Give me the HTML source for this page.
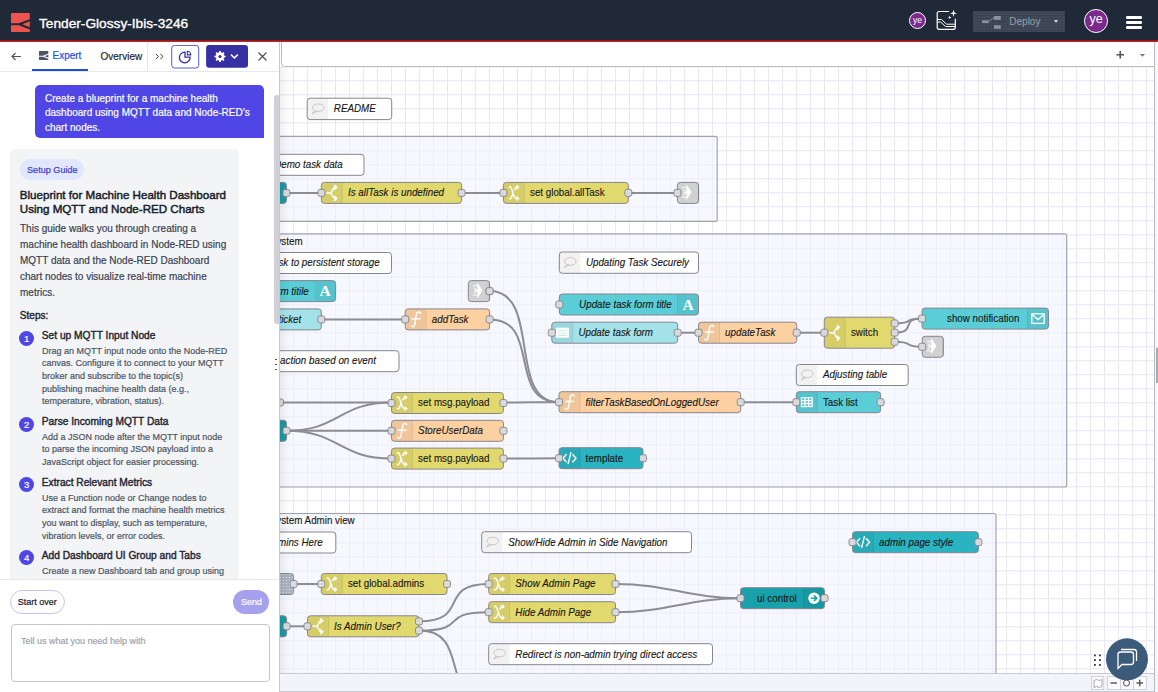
<!DOCTYPE html>
<html><head><meta charset="utf-8">
<style>
*{box-sizing:border-box}
html,body{margin:0;padding:0}
body{width:1158px;height:692px;overflow:hidden;position:relative;background:#fff;font-family:"Liberation Sans",sans-serif;}
#hdr{position:absolute;left:0;top:0;width:1158px;height:40px;background:#1f2937;}
#redl{position:absolute;left:0;top:40px;width:1158px;height:2px;background:linear-gradient(#7a2228 0 50%,#d41d1d 50% 100%);}
.abs{position:absolute}
#side div{-webkit-text-stroke:0.2px currentColor}

#side{position:absolute;left:0;top:42px;width:280px;height:650px;background:#fff;border-right:1px solid #c9c9d1;}
#canvas{position:absolute;left:280px;top:42px;width:878px;height:650px;overflow:hidden}
#canvas svg{position:absolute;left:0;top:0}
.nl{font-family:"Liberation Sans",sans-serif;font-size:10.6px;fill:#161616;stroke:#161616;stroke-width:0.12px}
.i{font-style:italic}
.gl{font-family:"Liberation Sans",sans-serif;font-size:10.6px;fill:#161616;stroke:#161616;stroke-width:0.12px}
.st{position:absolute;left:41.8px;font-size:10.2px;color:#1f2633;white-space:nowrap;-webkit-text-stroke:0.4px #1f2633 !important}
.sb{position:absolute;left:41.8px;font-size:9.7px;color:#4b5563;line-height:12.7px;white-space:nowrap;transform:scaleX(0.928);transform-origin:0 0}
.num{position:absolute;left:19.1px;width:15px;height:15px;border-radius:50%;background:#4f46e5;color:#fff;font-size:9.5px;text-align:center;line-height:15px}
</style></head><body>
<div id="hdr">
  <svg class="abs" style="left:10.8px;top:13px" width="19" height="19" viewBox="0 0 19 19">
    <rect x="0" y="0" width="18.8" height="19.2" rx="0.8" fill="#ef5350"/>
    <path d="M0 11.3H8.2L19 7.2M8.2 11.3L19 15.4" stroke="#1f2937" stroke-width="2.1" fill="none"/>
  </svg>
  <div class="abs" style="left:39px;top:16px;font-size:13.7px;color:#fff;white-space:nowrap;-webkit-text-stroke:0.35px #fff">Tender-Glossy-Ibis-3246</div>
  <div class="abs" style="left:908.8px;top:12.2px;width:17.2px;height:17.2px;border-radius:50%;background:#7b2a8c;border:1.2px solid #fff;color:#fff;font-size:8.5px;text-align:center;line-height:14.8px">ye</div>
  <svg class="abs" style="left:936px;top:10px" width="23" height="21" viewBox="936 10 23 21" fill="none" stroke="#fff" stroke-width="1.2">
    <path d="M949 11.5H939.2Q937.2 11.5 937.2 13.5V27.3Q937.2 29.3 939.2 29.3H953.3Q955.3 29.3 955.3 27.3V18.8"/>
    <path d="M937.2 19.5H941.5L946.5 24.2H955.3M937.2 22H940.5L945.5 26.5H955.3" stroke-width="1"/>
    <path d="M953.5 9.6L954.3 12.5L957.2 13.3L954.3 14.1L953.5 17L952.7 14.1L949.8 13.3L952.7 12.5Z" fill="#fff" stroke="none"/>
    <path d="M949.7 15.6L950.2 16.9L951.5 17.4L950.2 17.9L949.7 19.2L949.2 17.9L947.9 17.4L949.2 16.9Z" fill="#fff" stroke="none"/>
  </svg>
  <div class="abs" style="left:973px;top:11px;width:92px;height:20.8px;background-color:#3e4856;background-image:radial-gradient(#323a46 0.6px,transparent 0.7px);background-size:3px 3px"></div>
  <svg class="abs" style="left:980px;top:15px" width="22" height="15" viewBox="980 15 22 15" fill="#8a919c">
    <rect x="982" y="20.3" width="6.7" height="2.8"/><path d="M988 21.8L994 17.6" stroke="#8a919c" stroke-width="0.9"/><rect x="994" y="16" width="6.8" height="3.9"/><rect x="994" y="25.2" width="6.8" height="3.6"/>
  </svg>
  <div class="abs" style="left:1009.3px;top:16.2px;font-size:10px;color:#9aa0aa">Deploy</div>
  <div class="abs" style="left:1053.8px;top:20.3px;width:0;height:0;border-left:2.8px solid transparent;border-right:2.8px solid transparent;border-top:3.2px solid #d4d7dc"></div>
  <div class="abs" style="left:1084.3px;top:9.1px;width:23.8px;height:23.8px;border-radius:50%;background:#7b2a8c;border:1.4px solid #fff;color:#fff;font-size:12.5px;text-align:center;line-height:19.5px">ye</div>
  <div class="abs" style="left:1126.2px;top:15.9px;width:15.7px;height:2.7px;background:#fff;border-radius:1.3px"></div>
  <div class="abs" style="left:1126.2px;top:21.1px;width:15.7px;height:2.7px;background:#fff;border-radius:1.3px"></div>
  <div class="abs" style="left:1126.2px;top:26.2px;width:15.7px;height:2.7px;background:#fff;border-radius:1.3px"></div>
</div>
<div id="redl"></div>

<div id="side">
  <!-- tab bar -->
  <div class="abs" style="left:0;top:28.5px;width:279px;height:1px;background:#e5e7eb"></div>
  <svg class="abs" style="left:11px;top:10px" width="11" height="9" viewBox="0 0 11 9" fill="none" stroke="#4b5563" stroke-width="1.2"><path d="M10 4.5H1M4.5 1L1 4.5L4.5 8"/></svg>
  <svg class="abs" style="left:39px;top:9px" width="10" height="9" viewBox="0 0 10 9"><rect width="9.3" height="9" rx="0.5" fill="#4b5563"/><path d="M0 5.2H4L10 3M4 5.2L10 7.4" stroke="#fff" stroke-width="1.1" fill="none"/></svg>
  <div class="abs" style="left:52.5px;top:8px;font-size:10px;color:#1d4ed8">Expert</div>
  <div class="abs" style="left:32px;top:27px;width:56px;height:2px;background:#1d4ed8"></div>
  <div class="abs" style="left:100.5px;top:8.5px;font-size:10px;color:#1f2937">Overview</div>
  <div class="abs" style="left:147px;top:0;width:1px;height:29px;background:#e5e7eb"></div>
  <svg class="abs" style="left:150px;top:3px" width="110" height="26" viewBox="150 45 110 26">
    <path d="M155.8 54L158.6 56.5L155.8 59M160.3 54L163.1 56.5L160.3 59" stroke="#374151" stroke-width="1" fill="none"/>
    <rect x="171.7" y="45.4" width="27" height="22.6" rx="2.8" fill="#fff" stroke="#5b57e6" stroke-width="1"/>
    <path d="M185 52.2A5.3 5.3 0 1 0 190 57.2H185Z" fill="none" stroke="#3730a3" stroke-width="1.3"/>
    <path d="M187.3 51.3V54.9H190.8A3.7 3.7 0 0 0 187.3 51.3Z" fill="none" stroke="#3730a3" stroke-width="1.1"/>
    <rect x="206.1" y="45" width="41.9" height="22.7" rx="3" fill="#3730a3"/>
    <path d="M224.08 55.49 L225.54 55.67 L225.54 57.33 L224.08 57.51 L223.60 58.67 L224.50 59.83 L223.33 61.00 L222.17 60.10 L221.01 60.58 L220.83 62.04 L219.17 62.04 L218.99 60.58 L217.83 60.10 L216.67 61.00 L215.50 59.83 L216.40 58.67 L215.92 57.51 L214.46 57.33 L214.46 55.67 L215.92 55.49 L216.40 54.33 L215.50 53.17 L216.67 52.00 L217.83 52.90 L218.99 52.42 L219.17 50.96 L220.83 50.96 L221.01 52.42 L222.17 52.90 L223.33 52.00 L224.50 53.17 L223.60 54.33Z" fill="#fff"/>
    <circle cx="220" cy="56.5" r="1.6" fill="#3730a3"/>
    <path d="M231 54.6L234.4 58L237.8 54.6" stroke="#fff" stroke-width="1.5" fill="none"/>
  </svg>
  <svg class="abs" style="left:257.5px;top:10px" width="9" height="9" viewBox="0 0 9 9" stroke="#4b5563" stroke-width="1.3"><path d="M0.5 0.5L8.5 8.5M8.5 0.5L0.5 8.5"/></svg>

  <!-- chat content -->
  <div class="abs" style="left:35px;top:42.8px;width:229px;height:53.6px;background:#4f46e5;border-radius:5px 5px 0 5px"></div>
  <div class="abs" style="left:45.2px;top:48.7px;font-size:10.8px;line-height:14.6px;color:#fff;white-space:nowrap;transform:scaleX(0.926);transform-origin:0 0">Create a blueprint for a machine health<br>dashboard using MQTT data and Node-RED’s<br>chart nodes.</div>
  <div class="abs" style="left:274px;top:53px;width:5px;height:229px;background:#d0d0d6;border-radius:3px 0 0 3px"></div>

  <div class="abs" style="left:10px;top:107px;width:228.5px;height:430px;background:#f3f4f6;border-radius:5px 5px 0 0"></div>
  <div class="abs" style="left:19.5px;top:116.5px;width:64.3px;height:21.7px;background:#e0e7ff;border-radius:11px"></div>
  <div class="abs" style="left:27.2px;top:121.9px;font-size:9.6px;color:#4338ca;white-space:nowrap;transform:scaleX(0.95);transform-origin:0 0">Setup Guide</div>
  <div class="abs bt" style="left:19.8px;top:145.5px;font-size:11.6px;line-height:14px;color:#161c28;white-space:nowrap;-webkit-text-stroke:0.45px #161c28 !important">Blueprint for Machine Health Dashboard<br>Using MQTT and Node-RED Charts</div>
  <div class="abs" style="left:20px;top:179px;font-size:10.8px;line-height:15.9px;color:#374151;white-space:nowrap;transform:scaleX(0.926);transform-origin:0 0">This guide walks you through creating a<br>machine health dashboard in Node-RED using<br>MQTT data and the Node-RED Dashboard<br>chart nodes to visualize real-time machine<br>metrics.</div>
  <div class="abs bt" style="left:19.8px;top:268px;font-size:10.1px;color:#1f2633;-webkit-text-stroke:0.4px #1f2633 !important">Steps:</div>

  <div class="num" style="top:288.7px">1</div>
  <div class="st" style="top:288px">Set up MQTT Input Node</div>
  <div class="sb" style="top:302.6px">Drag an MQTT input node onto the Node-RED<br>canvas. Configure it to connect to your MQTT<br>broker and subscribe to the topic(s)<br>publishing machine health data (e.g.,<br>temperature, vibration, status).</div>

  <div class="num" style="top:375.2px">2</div>
  <div class="st" style="top:374px">Parse Incoming MQTT Data</div>
  <div class="sb" style="top:388.6px">Add a JSON node after the MQTT input node<br>to parse the incoming JSON payload into a<br>JavaScript object for easier processing.</div>

  <div class="num" style="top:434.9px">3</div>
  <div class="st" style="top:435px">Extract Relevant Metrics</div>
  <div class="sb" style="top:449.6px">Use a Function node or Change nodes to<br>extract and format the machine health metrics<br>you want to display, such as temperature,<br>vibration levels, or error codes.</div>

  <div class="num" style="top:507.9px">4</div>
  <div class="st" style="top:508px">Add Dashboard UI Group and Tabs</div>
  <div class="sb" style="top:523px">Create a new Dashboard tab and group using</div>

  <!-- bottom -->
  <div class="abs" style="left:0;top:537px;width:279px;height:113px;background:#fff;border-top:1px solid #e5e7eb"></div>
  <div class="abs" style="left:10px;top:548px;width:55px;height:23.5px;border:1px solid #c3c6f6;border-radius:12px;background:#fff"></div>
  <div class="abs" style="left:17.7px;top:555px;font-size:9px;color:#111827;white-space:nowrap">Start over</div>
  <div class="abs" style="left:233.3px;top:548px;width:36px;height:23.6px;background:#a5a1ec;border-radius:12px"></div>
  <div class="abs" style="left:241px;top:555px;font-size:9px;color:#fff">Send</div>
  <div class="abs" style="left:10.5px;top:582px;width:259px;height:57.5px;border:1px solid #c4c5cc;border-radius:4px;background:#fff"></div>
  <div class="abs" style="left:21px;top:594px;font-size:9px;color:#9ca3af;white-space:nowrap">Tell us what you need help with</div>
  <div class="abs" style="left:275px;top:317px;width:2px;height:12px;background:repeating-linear-gradient(#555 0 1.5px,transparent 1.5px 5px)"></div>
</div>

<div id="canvas">
  <svg width="878" height="650" viewBox="280 42 878 650">
    <rect x="280" y="42" width="878" height="650" fill="#fff"/>
    <defs><pattern id="dots" width="3" height="3" patternUnits="userSpaceOnUse"><rect width="3" height="3" fill="#aab3c2"/><rect x="1" y="1" width="1" height="1" fill="#d6dbe3"/></pattern></defs>
<rect x="280" y="67" width="874" height="607" fill="#fff"/>
<path d="M280 66.7H1154 M280 80.7H1154 M280 94.7H1154 M280 108.7H1154 M280 122.7H1154 M280 136.7H1154 M280 150.7H1154 M280 164.7H1154 M280 178.7H1154 M280 192.7H1154 M280 206.7H1154 M280 220.7H1154 M280 234.7H1154 M280 248.7H1154 M280 262.7H1154 M280 276.7H1154 M280 290.7H1154 M280 304.7H1154 M280 318.7H1154 M280 332.7H1154 M280 346.7H1154 M280 360.7H1154 M280 374.7H1154 M280 388.7H1154 M280 402.7H1154 M280 416.7H1154 M280 430.7H1154 M280 444.7H1154 M280 458.7H1154 M280 472.7H1154 M280 486.7H1154 M280 500.7H1154 M280 514.7H1154 M280 528.7H1154 M280 542.7H1154 M280 556.7H1154 M280 570.7H1154 M280 584.7H1154 M280 598.7H1154 M280 612.7H1154 M280 626.7H1154 M280 640.7H1154 M280 654.7H1154 M280 668.7H1154" stroke="#eeeef9" stroke-width="1.6" fill="none"/>
<path d="M293.5 67V674 M307.5 67V674 M321.5 67V674 M335.5 67V674 M349.5 67V674 M363.5 67V674 M377.5 67V674 M391.5 67V674 M405.5 67V674 M419.5 67V674 M433.5 67V674 M447.5 67V674 M461.5 67V674 M475.5 67V674 M489.5 67V674 M503.5 67V674 M517.5 67V674 M531.5 67V674 M545.5 67V674 M559.5 67V674 M573.5 67V674 M587.5 67V674 M601.5 67V674 M615.5 67V674 M629.5 67V674 M643.5 67V674 M656.5 67V674 M670.5 67V674 M684.5 67V674 M698.5 67V674 M712.5 67V674 M726.5 67V674 M740.5 67V674 M754.5 67V674 M768.5 67V674 M782.5 67V674 M796.5 67V674 M810.5 67V674 M824.5 67V674 M838.5 67V674 M852.5 67V674 M866.5 67V674 M880.5 67V674 M894.5 67V674 M908.5 67V674 M922.5 67V674 M936.5 67V674 M950.5 67V674 M964.5 67V674 M978.5 67V674 M992.5 67V674 M1006.5 67V674 M1020.5 67V674 M1034.5 67V674 M1048.5 67V674 M1062.5 67V674 M1076.5 67V674 M1090.5 67V674 M1104.5 67V674 M1118.5 67V674 M1132.5 67V674 M1146.5 67V674" stroke="#e7e7f6" stroke-width="1" fill="none"/>
<rect x="307.2" y="98.2" width="84.5" height="21.39999999999999" rx="3" fill="#fff" stroke="#858590" stroke-width="1"/>
<path d="M307.7 98.7h20.5v20.39999999999999h-20.5z" fill="rgba(0,0,0,0.05)"/>
<g transform="translate(317.7,108.9)" fill="none" stroke="#c4b8ba" stroke-width="0.8"><ellipse cx="0.5" cy="-1.2" rx="5.8" ry="3.8"/><path d="M-3.2 1.8L-5.5 4.8L-0.5 2.5"/></g>
<text transform="translate(333.8 112.3) scale(0.925 1)" class="nl i">README</text>
<rect x="200" y="136.3" width="517.2" height="85.1" rx="2" fill="rgba(241,243,252,0.59)" stroke="#a3a3ad" stroke-width="1.2"/>
<rect x="150" y="154.3" width="214" height="21" rx="3" fill="#fff" stroke="#858590" stroke-width="1"/>
<text transform="translate(342.8 168.2) scale(0.925 1)" text-anchor="end" class="nl i">Demo task data</text>
<path d="M286.4 193C312.65 193 295.15 193 321.4 193" stroke="#8c8c92" stroke-width="2" fill="none"/>
<path d="M461.6 193C492.95 193 472.05 193 503.4 193" stroke="#8c8c92" stroke-width="2" fill="none"/>
<path d="M628.3 193C665.12 193 640.57 193 677.4 193" stroke="#8c8c92" stroke-width="2" fill="none"/>
<rect x="200" y="182.4" width="86.4" height="21" rx="3" fill="#1a9aa6" stroke="#858590" stroke-width="1"/>
<rect x="282.9" y="189.5" width="7" height="7" rx="2" fill="#d9d9d9" stroke="#858590" stroke-width="0.9"/>
<rect x="321.4" y="182.4" width="140.20000000000005" height="21.0" rx="3" fill="#e2d96e" stroke="#858590" stroke-width="1"/>
<path d="M342.4 182.9H324.4Q321.9 182.9 321.9 185.4V200.4Q321.9 202.9 324.4 202.9H342.4Z" fill="rgba(0,0,0,0.05)"/>
<path d="M342.4 183.4V202.4" stroke="rgba(0,0,0,0.08)" stroke-width="1"/>
<g transform="translate(331.9,192.9)" stroke="#fff" stroke-width="1.5" fill="none" stroke-linecap="round" stroke-linejoin="round"><path d="M-5 0H-1.5M-1.5 0C0.5 0 0.5 -5.5 3 -5.5H4M-1.5 0C0.5 0 0.5 5.5 3 5.5H4"/><path d="M2.5 -7.5L4.8 -5.5L2.5 -3.5M2.5 7.5L4.8 5.5L2.5 3.5"/></g>
<text transform="translate(348.0 196.3) scale(0.925 1)" class="nl i">Is allTask is undefined</text>
<rect x="317.9" y="189.4" width="7" height="7" rx="2" fill="#d9d9d9" stroke="#858590" stroke-width="0.9"/>
<rect x="458.1" y="189.4" width="7" height="7" rx="2" fill="#d9d9d9" stroke="#858590" stroke-width="0.9"/>
<rect x="503.4" y="182.4" width="124.89999999999998" height="21.0" rx="3" fill="#e2d96e" stroke="#858590" stroke-width="1"/>
<path d="M524.4 182.9H506.4Q503.9 182.9 503.9 185.4V200.4Q503.9 202.9 506.4 202.9H524.4Z" fill="rgba(0,0,0,0.05)"/>
<path d="M524.4 183.4V202.4" stroke="rgba(0,0,0,0.08)" stroke-width="1"/>
<g transform="translate(513.9,192.9)"><path d="M-5.2 -5.8H-3.8C-1.5 -5.8 -0.5 5.6 2.2 5.6H3M-5.2 5.8H-3.8C-2.6 5.8 -1.8 3 -1 1M0.6 -2.6C1.2 -4.6 1.6 -5.6 2.2 -5.6H3" stroke="#fff" stroke-width="1.5" fill="none"/><path d="M2.6 -8.3L5.8 -5.6L2.6 -2.9ZM2.6 2.9L5.8 5.6L2.6 8.3Z" fill="#fff"/></g>
<text transform="translate(530.0 196.3) scale(0.925 1)" class="nl">set global.allTask</text>
<rect x="499.9" y="189.4" width="7" height="7" rx="2" fill="#d9d9d9" stroke="#858590" stroke-width="0.9"/>
<rect x="624.8" y="189.4" width="7" height="7" rx="2" fill="#d9d9d9" stroke="#858590" stroke-width="0.9"/>
<rect x="677.4" y="182.4" width="21.200000000000045" height="21.0" rx="3" fill="#dddddd" stroke="#858590" stroke-width="1"/>
<path d="M698.4 182.9H680.4Q677.9 182.9 677.9 185.4V200.4Q677.9 202.9 680.4 202.9H698.4Z" fill="rgba(0,0,0,0.05)"/>
<path d="M698.4 183.4V202.4" stroke="rgba(0,0,0,0.08)" stroke-width="1"/>
<g transform="translate(687.6,192.5)"><path d="M-1.2 -8.2L3.8 -0.3L-1.2 7.6L0.6 -0.3Z" fill="#fff"/><path d="M-1.2 -8.2L3.8 -0.3L-1.2 7.6Z" fill="#fff"/><path d="M-5.6 -5H-1.2M-5.6 4.5H-1.2M-4.8 -2.8A2.6 2.6 0 0 1 -4.8 2.4M-4.5 -0.3H0" stroke="#fff" stroke-width="0.9" fill="none"/></g>
<rect x="673.9" y="189.4" width="7" height="7" rx="2" fill="#d9d9d9" stroke="#858590" stroke-width="0.9"/>
<rect x="200" y="233.8" width="866.7" height="253.2" rx="2" fill="rgba(241,243,252,0.59)" stroke="#a3a3ad" stroke-width="1.2"/>
<text transform="translate(302.6 245) scale(0.925 1)" text-anchor="end" class="gl">Task Management System</text>
<rect x="150" y="252.5" width="241.5" height="21" rx="3" fill="#fff" stroke="#858590" stroke-width="1"/>
<text transform="translate(379.7 266.3) scale(0.925 1)" text-anchor="end" class="nl i">Save task to persistent storage</text>
<rect x="150" y="280.6" width="185.6" height="21" rx="3" fill="#5acdd7" stroke="#858590" stroke-width="1"/>
<path d="M314.6 281.1h20.5v20h-20.5z" fill="rgba(0,0,0,0.05)"/>
<text x="325.1" y="296.40000000000003" text-anchor="middle" font-family="Liberation Serif" font-weight="bold" font-size="15.5" fill="#fff">A</text>
<text transform="translate(308.8 294.5) scale(0.925 1)" text-anchor="end" class="nl i">Update task form titile</text>
<rect x="150" y="308.9" width="171.3" height="21" rx="3" fill="#a3e2e9" stroke="#858590" stroke-width="1"/>
<text transform="translate(301.3 322.5) scale(0.925 1)" text-anchor="end" class="nl i">Create ticket</text>
<path d="M321.3 319.4C373.80 319.4 352.70 319.4 405.2 319.4" stroke="#8c8c92" stroke-width="2" fill="none"/>
<rect x="317.8" y="315.9" width="7" height="7" rx="2" fill="#d9d9d9" stroke="#858590" stroke-width="0.9"/>
<rect x="468.3" y="280.6" width="21.30000000000001" height="21.0" rx="3" fill="#dddddd" stroke="#858590" stroke-width="1"/>
<path d="M489.3 281.1H471.3Q468.8 281.1 468.8 283.6V298.6Q468.8 301.1 471.3 301.1H489.3Z" fill="rgba(0,0,0,0.05)"/>
<path d="M489.3 281.6V300.6" stroke="rgba(0,0,0,0.08)" stroke-width="1"/>
<g transform="translate(478.5,290.70000000000005)"><path d="M-1.2 -8.2L3.8 -0.3L-1.2 7.6L0.6 -0.3Z" fill="#fff"/><path d="M-1.2 -8.2L3.8 -0.3L-1.2 7.6Z" fill="#fff"/><path d="M-5.6 -5H-1.2M-5.6 4.5H-1.2M-4.8 -2.8A2.6 2.6 0 0 1 -4.8 2.4M-4.5 -0.3H0" stroke="#fff" stroke-width="0.9" fill="none"/></g>
<rect x="486.1" y="287.6" width="7" height="7" rx="2" fill="#d9d9d9" stroke="#858590" stroke-width="0.9"/>
<path d="M489.6 291.1C542.10 291.1 506.50 402.2 559 402.2" stroke="#8c8c92" stroke-width="2" fill="none"/>
<path d="M489.6 319.4C542.10 319.4 506.50 402.2 559 402.2" stroke="#8c8c92" stroke-width="2" fill="none"/>
<rect x="405.2" y="308.9" width="84.40000000000003" height="21.0" rx="3" fill="#fdd0a2" stroke="#858590" stroke-width="1"/>
<path d="M426.2 309.4H408.2Q405.7 309.4 405.7 311.9V326.9Q405.7 329.4 408.2 329.4H426.2Z" fill="rgba(0,0,0,0.05)"/>
<path d="M426.2 309.9V328.9" stroke="rgba(0,0,0,0.08)" stroke-width="1"/>
<g transform="translate(415.7,319.4)" stroke="#fff" stroke-width="1.5" fill="none" stroke-linecap="round"><path d="M4.8 -6.2C3.8 -8 1 -7.5 0.6 -5L-0.9 5C-1.3 7.5 -3.8 8 -4.2 6.3M-3.8 -0.6H4.2"/></g>
<text transform="translate(431.8 322.8) scale(0.925 1)" class="nl i">addTask</text>
<rect x="401.7" y="315.9" width="7" height="7" rx="2" fill="#d9d9d9" stroke="#858590" stroke-width="0.9"/>
<rect x="486.1" y="315.9" width="7" height="7" rx="2" fill="#d9d9d9" stroke="#858590" stroke-width="0.9"/>
<rect x="486.1" y="287.6" width="7" height="7" rx="2" fill="#d9d9d9" stroke="#858590" stroke-width="0.9"/>
<rect x="150" y="350.7" width="249" height="21" rx="3" fill="#fff" stroke="#858590" stroke-width="1"/>
<text transform="translate(376 364.4) scale(0.925 1)" text-anchor="end" class="nl i">Perform action based on event</text>
<rect x="559.3" y="252" width="139.20000000000005" height="21.30000000000001" rx="3" fill="#fff" stroke="#858590" stroke-width="1"/>
<path d="M559.8 252.5h20.5v20.30000000000001h-20.5z" fill="rgba(0,0,0,0.05)"/>
<g transform="translate(569.8,262.65)" fill="none" stroke="#c4b8ba" stroke-width="0.8"><ellipse cx="0.5" cy="-1.2" rx="5.8" ry="3.8"/><path d="M-3.2 1.8L-5.5 4.8L-0.5 2.5"/></g>
<text transform="translate(585.9 266.0) scale(0.925 1)" class="nl i">Updating Task Securely</text>
<rect x="559.3" y="294" width="139.20000000000005" height="21" rx="3" fill="#5acdd7" stroke="#858590" stroke-width="1"/>
<path d="M677.5 294.5H695.5Q698.0 294.5 698.0 297V312Q698.0 314.5 695.5 314.5H677.5Z" fill="rgba(0,0,0,0.05)"/>
<path d="M677.5 295V314" stroke="rgba(0,0,0,0.08)" stroke-width="1"/>
<text x="688.0" y="309.8" text-anchor="middle" font-family="Liberation Serif" font-weight="bold" font-size="15.5" fill="#fff">A</text>
<text transform="translate(579.1 307.9) scale(0.925 1)" class="nl i">Update task form title</text>
<rect x="555.8" y="301.0" width="7" height="7" rx="2" fill="#d9d9d9" stroke="#858590" stroke-width="0.9"/>
<path d="M677.7 332.7C693.30 332.7 682.90 332.7 698.5 332.7" stroke="#8c8c92" stroke-width="2" fill="none"/>
<rect x="551.8" y="322.2" width="125.90000000000009" height="21.0" rx="3" fill="#a3e2e9" stroke="#858590" stroke-width="1"/>
<path d="M572.8 322.7H554.8Q552.3 322.7 552.3 325.2V340.2Q552.3 342.7 554.8 342.7H572.8Z" fill="rgba(0,0,0,0.05)"/>
<path d="M572.8 323.2V342.2" stroke="rgba(0,0,0,0.08)" stroke-width="1"/>
<g transform="translate(562.3,332.7)"><rect x="-6.4" y="-5" width="13" height="10" fill="#fff"/><path d="M-4.6 -2.2H4.8M-4.6 0.3H4.8M-4.6 2.8H4.8" stroke="#c9eef2" stroke-width="1"/></g>
<text transform="translate(578.4 336.1) scale(0.925 1)" class="nl i">Update task form</text>
<rect x="548.3" y="329.2" width="7" height="7" rx="2" fill="#d9d9d9" stroke="#858590" stroke-width="0.9"/>
<rect x="674.2" y="329.2" width="7" height="7" rx="2" fill="#d9d9d9" stroke="#858590" stroke-width="0.9"/>
<path d="M796.7 332.7C817.40 332.7 803.60 332.7 824.3 332.7" stroke="#8c8c92" stroke-width="2" fill="none"/>
<rect x="698.5" y="322.2" width="98.20000000000005" height="21.0" rx="3" fill="#fdd0a2" stroke="#858590" stroke-width="1"/>
<path d="M719.5 322.7H701.5Q699.0 322.7 699.0 325.2V340.2Q699.0 342.7 701.5 342.7H719.5Z" fill="rgba(0,0,0,0.05)"/>
<path d="M719.5 323.2V342.2" stroke="rgba(0,0,0,0.08)" stroke-width="1"/>
<g transform="translate(709.0,332.7)" stroke="#fff" stroke-width="1.5" fill="none" stroke-linecap="round"><path d="M4.8 -6.2C3.8 -8 1 -7.5 0.6 -5L-0.9 5C-1.3 7.5 -3.8 8 -4.2 6.3M-3.8 -0.6H4.2"/></g>
<text transform="translate(725.1 336.1) scale(0.925 1)" class="nl i">updateTask</text>
<rect x="695.0" y="329.2" width="7" height="7" rx="2" fill="#d9d9d9" stroke="#858590" stroke-width="0.9"/>
<rect x="793.2" y="329.2" width="7" height="7" rx="2" fill="#d9d9d9" stroke="#858590" stroke-width="0.9"/>
<path d="M894.7 323.4C915.49 323.4 901.21 318.6 922 318.6" stroke="#8c8c92" stroke-width="2" fill="none"/>
<path d="M894.7 332.6C917.71 332.6 898.99 318.6 922 318.6" stroke="#8c8c92" stroke-width="2" fill="none"/>
<path d="M894.7 341.8C915.66 341.8 901.24 346.8 922.2 346.8" stroke="#8c8c92" stroke-width="2" fill="none"/>
<rect x="824.3" y="317.2" width="70.40000000000009" height="31.0" rx="3" fill="#e2d96e" stroke="#858590" stroke-width="1"/>
<path d="M845.3 317.7H827.3Q824.8 317.7 824.8 320.2V345.2Q824.8 347.7 827.3 347.7H845.3Z" fill="rgba(0,0,0,0.05)"/>
<path d="M845.3 318.2V347.2" stroke="rgba(0,0,0,0.08)" stroke-width="1"/>
<g transform="translate(834.8,332.7)" stroke="#fff" stroke-width="1.5" fill="none" stroke-linecap="round" stroke-linejoin="round"><path d="M-5 0H-1.5M-1.5 0C0.5 0 0.5 -5.5 3 -5.5H4M-1.5 0C0.5 0 0.5 5.5 3 5.5H4"/><path d="M2.5 -7.5L4.8 -5.5L2.5 -3.5M2.5 7.5L4.8 5.5L2.5 3.5"/></g>
<text transform="translate(850.9 336.1) scale(0.925 1)" class="nl">switch</text>
<rect x="820.8" y="329.2" width="7" height="7" rx="2" fill="#d9d9d9" stroke="#858590" stroke-width="0.9"/>
<rect x="891.2" y="319.9" width="7" height="7" rx="2" fill="#d9d9d9" stroke="#858590" stroke-width="0.9"/>
<rect x="891.2" y="329.1" width="7" height="7" rx="2" fill="#d9d9d9" stroke="#858590" stroke-width="0.9"/>
<rect x="891.2" y="338.3" width="7" height="7" rx="2" fill="#d9d9d9" stroke="#858590" stroke-width="0.9"/>
<rect x="922" y="308.1" width="126.5" height="21.0" rx="3" fill="#5acdd7" stroke="#858590" stroke-width="1"/>
<path d="M1027.5 308.6H1045.5Q1048.0 308.6 1048.0 311.1V326.1Q1048.0 328.6 1045.5 328.6H1027.5Z" fill="rgba(0,0,0,0.05)"/>
<path d="M1027.5 309.1V328.1" stroke="rgba(0,0,0,0.08)" stroke-width="1"/>
<g transform="translate(1038.0,318.6)" stroke="#fff" stroke-width="1.3" fill="none"><rect x="-6.2" y="-4.8" width="12.4" height="9.6"/><path d="M-6 -4.2L0 1L6 -4.2"/></g>
<text transform="translate(947 322.0) scale(0.925 1)" class="nl">show notification</text>
<rect x="918.5" y="315.1" width="7" height="7" rx="2" fill="#d9d9d9" stroke="#858590" stroke-width="0.9"/>
<rect x="922.2" y="336.3" width="21.09999999999991" height="21.0" rx="3" fill="#dddddd" stroke="#858590" stroke-width="1"/>
<path d="M943.2 336.8H925.2Q922.7 336.8 922.7 339.3V354.3Q922.7 356.8 925.2 356.8H943.2Z" fill="rgba(0,0,0,0.05)"/>
<path d="M943.2 337.3V356.3" stroke="rgba(0,0,0,0.08)" stroke-width="1"/>
<g transform="translate(932.4000000000001,346.40000000000003)"><path d="M-1.2 -8.2L3.8 -0.3L-1.2 7.6L0.6 -0.3Z" fill="#fff"/><path d="M-1.2 -8.2L3.8 -0.3L-1.2 7.6Z" fill="#fff"/><path d="M-5.6 -5H-1.2M-5.6 4.5H-1.2M-4.8 -2.8A2.6 2.6 0 0 1 -4.8 2.4M-4.5 -0.3H0" stroke="#fff" stroke-width="0.9" fill="none"/></g>
<rect x="918.7" y="343.3" width="7" height="7" rx="2" fill="#d9d9d9" stroke="#858590" stroke-width="0.9"/>
<rect x="796.3" y="364.5" width="111.90000000000009" height="21.0" rx="3" fill="#fff" stroke="#858590" stroke-width="1"/>
<path d="M796.8 365.0h20.5v20.0h-20.5z" fill="rgba(0,0,0,0.05)"/>
<g transform="translate(806.8,375.0)" fill="none" stroke="#c4b8ba" stroke-width="0.8"><ellipse cx="0.5" cy="-1.2" rx="5.8" ry="3.8"/><path d="M-3.2 1.8L-5.5 4.8L-0.5 2.5"/></g>
<text transform="translate(822.9 378.4) scale(0.925 1)" class="nl i">Adjusting table</text>
<path d="M280 402.5C332.50 402.5 339.00 402.5 391.5 402.5" stroke="#8c8c92" stroke-width="2" fill="none"/>
<rect x="276.5" y="399.0" width="7" height="7" rx="2" fill="#d9d9d9" stroke="#858590" stroke-width="0.9"/>
<path d="M286.5 430.8C339.00 430.8 339.00 402.5 391.5 402.5" stroke="#8c8c92" stroke-width="2" fill="none"/>
<path d="M286.5 430.8C339.00 430.8 339.00 430.8 391.5 430.8" stroke="#8c8c92" stroke-width="2" fill="none"/>
<path d="M286.5 430.8C339.00 430.8 339.00 458.6 391.5 458.6" stroke="#8c8c92" stroke-width="2" fill="none"/>
<rect x="200" y="420.3" width="86.5" height="21" rx="3" fill="#1a9aa6" stroke="#858590" stroke-width="1"/>
<rect x="283.0" y="427.3" width="7" height="7" rx="2" fill="#d9d9d9" stroke="#858590" stroke-width="0.9"/>
<path d="M503.4 402.5C545.10 402.5 517.30 402.2 559 402.2" stroke="#8c8c92" stroke-width="2" fill="none"/>
<path d="M503.4 458.6C545.10 458.6 517.30 458.2 559 458.2" stroke="#8c8c92" stroke-width="2" fill="none"/>
<path d="M740.7 402.2C782.40 402.2 754.60 402.2 796.3 402.2" stroke="#8c8c92" stroke-width="2" fill="none"/>
<rect x="391.5" y="392.5" width="111.89999999999998" height="21.0" rx="3" fill="#e2d96e" stroke="#858590" stroke-width="1"/>
<path d="M412.5 393.0H394.5Q392.0 393.0 392.0 395.5V410.5Q392.0 413.0 394.5 413.0H412.5Z" fill="rgba(0,0,0,0.05)"/>
<path d="M412.5 393.5V412.5" stroke="rgba(0,0,0,0.08)" stroke-width="1"/>
<g transform="translate(402.0,403.0)"><path d="M-5.2 -5.8H-3.8C-1.5 -5.8 -0.5 5.6 2.2 5.6H3M-5.2 5.8H-3.8C-2.6 5.8 -1.8 3 -1 1M0.6 -2.6C1.2 -4.6 1.6 -5.6 2.2 -5.6H3" stroke="#fff" stroke-width="1.5" fill="none"/><path d="M2.6 -8.3L5.8 -5.6L2.6 -2.9ZM2.6 2.9L5.8 5.6L2.6 8.3Z" fill="#fff"/></g>
<text transform="translate(418.1 406.4) scale(0.925 1)" class="nl">set msg.payload</text>
<rect x="388.0" y="399.5" width="7" height="7" rx="2" fill="#d9d9d9" stroke="#858590" stroke-width="0.9"/>
<rect x="499.9" y="399.5" width="7" height="7" rx="2" fill="#d9d9d9" stroke="#858590" stroke-width="0.9"/>
<rect x="391.5" y="420.3" width="111.89999999999998" height="21.0" rx="3" fill="#fdd0a2" stroke="#858590" stroke-width="1"/>
<path d="M412.5 420.8H394.5Q392.0 420.8 392.0 423.3V438.3Q392.0 440.8 394.5 440.8H412.5Z" fill="rgba(0,0,0,0.05)"/>
<path d="M412.5 421.3V440.3" stroke="rgba(0,0,0,0.08)" stroke-width="1"/>
<g transform="translate(402.0,430.8)" stroke="#fff" stroke-width="1.5" fill="none" stroke-linecap="round"><path d="M4.8 -6.2C3.8 -8 1 -7.5 0.6 -5L-0.9 5C-1.3 7.5 -3.8 8 -4.2 6.3M-3.8 -0.6H4.2"/></g>
<text transform="translate(418.1 434.2) scale(0.925 1)" class="nl i">StoreUserData</text>
<rect x="388.0" y="427.3" width="7" height="7" rx="2" fill="#d9d9d9" stroke="#858590" stroke-width="0.9"/>
<rect x="499.9" y="427.3" width="7" height="7" rx="2" fill="#d9d9d9" stroke="#858590" stroke-width="0.9"/>
<rect x="391.5" y="448.1" width="111.89999999999998" height="21.0" rx="3" fill="#e2d96e" stroke="#858590" stroke-width="1"/>
<path d="M412.5 448.6H394.5Q392.0 448.6 392.0 451.1V466.1Q392.0 468.6 394.5 468.6H412.5Z" fill="rgba(0,0,0,0.05)"/>
<path d="M412.5 449.1V468.1" stroke="rgba(0,0,0,0.08)" stroke-width="1"/>
<g transform="translate(402.0,458.6)"><path d="M-5.2 -5.8H-3.8C-1.5 -5.8 -0.5 5.6 2.2 5.6H3M-5.2 5.8H-3.8C-2.6 5.8 -1.8 3 -1 1M0.6 -2.6C1.2 -4.6 1.6 -5.6 2.2 -5.6H3" stroke="#fff" stroke-width="1.5" fill="none"/><path d="M2.6 -8.3L5.8 -5.6L2.6 -2.9ZM2.6 2.9L5.8 5.6L2.6 8.3Z" fill="#fff"/></g>
<text transform="translate(418.1 462.0) scale(0.925 1)" class="nl">set msg.payload</text>
<rect x="388.0" y="455.1" width="7" height="7" rx="2" fill="#d9d9d9" stroke="#858590" stroke-width="0.9"/>
<rect x="499.9" y="455.1" width="7" height="7" rx="2" fill="#d9d9d9" stroke="#858590" stroke-width="0.9"/>
<rect x="559" y="391.7" width="181.70000000000005" height="21.0" rx="3" fill="#fdd0a2" stroke="#858590" stroke-width="1"/>
<path d="M580 392.2H562Q559.5 392.2 559.5 394.7V409.7Q559.5 412.2 562 412.2H580Z" fill="rgba(0,0,0,0.05)"/>
<path d="M580 392.7V411.7" stroke="rgba(0,0,0,0.08)" stroke-width="1"/>
<g transform="translate(569.5,402.2)" stroke="#fff" stroke-width="1.5" fill="none" stroke-linecap="round"><path d="M4.8 -6.2C3.8 -8 1 -7.5 0.6 -5L-0.9 5C-1.3 7.5 -3.8 8 -4.2 6.3M-3.8 -0.6H4.2"/></g>
<text transform="translate(585.6 405.6) scale(0.925 1)" class="nl i">filterTaskBasedOnLoggedUser</text>
<rect x="555.5" y="398.7" width="7" height="7" rx="2" fill="#d9d9d9" stroke="#858590" stroke-width="0.9"/>
<rect x="737.2" y="398.7" width="7" height="7" rx="2" fill="#d9d9d9" stroke="#858590" stroke-width="0.9"/>
<rect x="796.3" y="391.7" width="84.30000000000007" height="21.0" rx="3" fill="#5acdd7" stroke="#858590" stroke-width="1"/>
<path d="M817.3 392.2H799.3Q796.8 392.2 796.8 394.7V409.7Q796.8 412.2 799.3 412.2H817.3Z" fill="rgba(0,0,0,0.05)"/>
<path d="M817.3 392.7V411.7" stroke="rgba(0,0,0,0.08)" stroke-width="1"/>
<g transform="translate(806.8,402.2)"><rect x="-6" y="-5" width="12" height="10" fill="#fff"/><g fill="#2ab3c0"><rect x="-4.8" y="-3.8" width="2.4" height="1.3"/><rect x="-1.2" y="-3.8" width="2.4" height="1.3"/><rect x="2.4" y="-3.8" width="2.4" height="1.3"/><rect x="-4.8" y="-0.8" width="2.4" height="1.3"/><rect x="-1.2" y="-0.8" width="2.4" height="1.3"/><rect x="2.4" y="-0.8" width="2.4" height="1.3"/><rect x="-4.8" y="2.2" width="2.4" height="1.3"/><rect x="-1.2" y="2.2" width="2.4" height="1.3"/><rect x="2.4" y="2.2" width="2.4" height="1.3"/></g></g>
<text transform="translate(822.9 405.6) scale(0.925 1)" class="nl">Task list</text>
<rect x="792.8" y="398.7" width="7" height="7" rx="2" fill="#d9d9d9" stroke="#858590" stroke-width="0.9"/>
<rect x="877.1" y="398.7" width="7" height="7" rx="2" fill="#d9d9d9" stroke="#858590" stroke-width="0.9"/>
<rect x="559" y="447.7" width="84" height="21.0" rx="3" fill="#2ab3c0" stroke="#858590" stroke-width="1"/>
<path d="M580 448.2H562Q559.5 448.2 559.5 450.7V465.7Q559.5 468.2 562 468.2H580Z" fill="rgba(0,0,0,0.05)"/>
<path d="M580 448.7V467.7" stroke="rgba(0,0,0,0.08)" stroke-width="1"/>
<g transform="translate(569.5,458.2)" stroke="#fff" stroke-width="1.4" fill="none"><path d="M-3 -4L-6.5 0L-3 4M3 -4L6.5 0L3 4M1.5 -6L-1.5 6"/></g>
<text transform="translate(585.6 461.6) scale(0.925 1)" class="nl">template</text>
<rect x="555.5" y="454.7" width="7" height="7" rx="2" fill="#d9d9d9" stroke="#858590" stroke-width="0.9"/>
<rect x="639.5" y="454.7" width="7" height="7" rx="2" fill="#d9d9d9" stroke="#858590" stroke-width="0.9"/>
<rect x="200" y="513.5" width="796" height="286.5" rx="2" fill="rgba(241,243,252,0.59)" stroke="#a3a3ad" stroke-width="1.2"/>
<text transform="translate(354.7 524.4) scale(0.925 1)" text-anchor="end" class="gl">Task Management System Admin view</text>
<rect x="150" y="532" width="185.8" height="21" rx="3" fill="#fff" stroke="#858590" stroke-width="1"/>
<text transform="translate(322.7 545.9) scale(0.925 1)" text-anchor="end" class="nl i">Define Admins Here</text>
<rect x="200" y="573.5" width="93.6" height="21" rx="3" fill="url(#dots)" stroke="#858590" stroke-width="1"/>
<path d="M293.6 584C314.38 584 300.53 584 321.3 584" stroke="#8c8c92" stroke-width="2" fill="none"/>
<rect x="290.1" y="580.5" width="7" height="7" rx="2" fill="#d9d9d9" stroke="#858590" stroke-width="0.9"/>
<rect x="321.3" y="573.5" width="125.69999999999999" height="21.0" rx="3" fill="#e2d96e" stroke="#858590" stroke-width="1"/>
<path d="M342.3 574.0H324.3Q321.8 574.0 321.8 576.5V591.5Q321.8 594.0 324.3 594.0H342.3Z" fill="rgba(0,0,0,0.05)"/>
<path d="M342.3 574.5V593.5" stroke="rgba(0,0,0,0.08)" stroke-width="1"/>
<g transform="translate(331.8,584.0)"><path d="M-5.2 -5.8H-3.8C-1.5 -5.8 -0.5 5.6 2.2 5.6H3M-5.2 5.8H-3.8C-2.6 5.8 -1.8 3 -1 1M0.6 -2.6C1.2 -4.6 1.6 -5.6 2.2 -5.6H3" stroke="#fff" stroke-width="1.5" fill="none"/><path d="M2.6 -8.3L5.8 -5.6L2.6 -2.9ZM2.6 2.9L5.8 5.6L2.6 8.3Z" fill="#fff"/></g>
<text transform="translate(347.90000000000003 587.4) scale(0.925 1)" class="nl">set global.admins</text>
<rect x="317.8" y="580.5" width="7" height="7" rx="2" fill="#d9d9d9" stroke="#858590" stroke-width="0.9"/>
<rect x="443.5" y="580.5" width="7" height="7" rx="2" fill="#d9d9d9" stroke="#858590" stroke-width="0.9"/>
<path d="M286.6 626.3C302.28 626.3 291.82 626.3 307.5 626.3" stroke="#8c8c92" stroke-width="2" fill="none"/>
<rect x="200" y="615.8" width="86.6" height="21" rx="3" fill="#1a9aa6" stroke="#858590" stroke-width="1"/>
<rect x="283.1" y="622.8" width="7" height="7" rx="2" fill="#d9d9d9" stroke="#858590" stroke-width="0.9"/>
<path d="M419 621.4C471.50 621.4 436.20 584 488.7 584" stroke="#8c8c92" stroke-width="2" fill="none"/>
<path d="M419 630.6C471.50 630.6 436.20 612.2 488.7 612.2" stroke="#8c8c92" stroke-width="2" fill="none"/>
<path d="M419 630.6C471.50 630.6 437.50 700 490 700" stroke="#8c8c92" stroke-width="2" fill="none"/>
<rect x="307.5" y="615.8" width="111.5" height="21.0" rx="3" fill="#e2d96e" stroke="#858590" stroke-width="1"/>
<path d="M328.5 616.3H310.5Q308.0 616.3 308.0 618.8V633.8Q308.0 636.3 310.5 636.3H328.5Z" fill="rgba(0,0,0,0.05)"/>
<path d="M328.5 616.8V635.8" stroke="rgba(0,0,0,0.08)" stroke-width="1"/>
<g transform="translate(318.0,626.3)" stroke="#fff" stroke-width="1.5" fill="none" stroke-linecap="round" stroke-linejoin="round"><path d="M-5 0H-1.5M-1.5 0C0.5 0 0.5 -5.5 3 -5.5H4M-1.5 0C0.5 0 0.5 5.5 3 5.5H4"/><path d="M2.5 -7.5L4.8 -5.5L2.5 -3.5M2.5 7.5L4.8 5.5L2.5 3.5"/></g>
<text transform="translate(334.1 629.7) scale(0.925 1)" class="nl i">Is Admin User?</text>
<rect x="304.0" y="622.8" width="7" height="7" rx="2" fill="#d9d9d9" stroke="#858590" stroke-width="0.9"/>
<rect x="415.5" y="617.9" width="7" height="7" rx="2" fill="#d9d9d9" stroke="#858590" stroke-width="0.9"/>
<rect x="415.5" y="627.1" width="7" height="7" rx="2" fill="#d9d9d9" stroke="#858590" stroke-width="0.9"/>
<rect x="481.7" y="531.7" width="209.8" height="21.0" rx="3" fill="#fff" stroke="#858590" stroke-width="1"/>
<path d="M482.2 532.2h20.5v20.0h-20.5z" fill="rgba(0,0,0,0.05)"/>
<g transform="translate(492.2,542.2)" fill="none" stroke="#c4b8ba" stroke-width="0.8"><ellipse cx="0.5" cy="-1.2" rx="5.8" ry="3.8"/><path d="M-3.2 1.8L-5.5 4.8L-0.5 2.5"/></g>
<text transform="translate(508.3 545.6) scale(0.925 1)" class="nl i">Show/Hide Admin in Side Navigation</text>
<path d="M615.5 584C668.00 584 688.00 598.2 740.5 598.2" stroke="#8c8c92" stroke-width="2" fill="none"/>
<path d="M615.5 612.2C668.00 612.2 688.00 598.2 740.5 598.2" stroke="#8c8c92" stroke-width="2" fill="none"/>
<rect x="488.7" y="573.5" width="126.80000000000001" height="21.0" rx="3" fill="#e2d96e" stroke="#858590" stroke-width="1"/>
<path d="M509.7 574.0H491.7Q489.2 574.0 489.2 576.5V591.5Q489.2 594.0 491.7 594.0H509.7Z" fill="rgba(0,0,0,0.05)"/>
<path d="M509.7 574.5V593.5" stroke="rgba(0,0,0,0.08)" stroke-width="1"/>
<g transform="translate(499.2,584.0)"><path d="M-5.2 -5.8H-3.8C-1.5 -5.8 -0.5 5.6 2.2 5.6H3M-5.2 5.8H-3.8C-2.6 5.8 -1.8 3 -1 1M0.6 -2.6C1.2 -4.6 1.6 -5.6 2.2 -5.6H3" stroke="#fff" stroke-width="1.5" fill="none"/><path d="M2.6 -8.3L5.8 -5.6L2.6 -2.9ZM2.6 2.9L5.8 5.6L2.6 8.3Z" fill="#fff"/></g>
<text transform="translate(515.3 587.4) scale(0.925 1)" class="nl i">Show Admin Page</text>
<rect x="485.2" y="580.5" width="7" height="7" rx="2" fill="#d9d9d9" stroke="#858590" stroke-width="0.9"/>
<rect x="612.0" y="580.5" width="7" height="7" rx="2" fill="#d9d9d9" stroke="#858590" stroke-width="0.9"/>
<rect x="488.7" y="601.7" width="126.80000000000001" height="21.0" rx="3" fill="#e2d96e" stroke="#858590" stroke-width="1"/>
<path d="M509.7 602.2H491.7Q489.2 602.2 489.2 604.7V619.7Q489.2 622.2 491.7 622.2H509.7Z" fill="rgba(0,0,0,0.05)"/>
<path d="M509.7 602.7V621.7" stroke="rgba(0,0,0,0.08)" stroke-width="1"/>
<g transform="translate(499.2,612.2)"><path d="M-5.2 -5.8H-3.8C-1.5 -5.8 -0.5 5.6 2.2 5.6H3M-5.2 5.8H-3.8C-2.6 5.8 -1.8 3 -1 1M0.6 -2.6C1.2 -4.6 1.6 -5.6 2.2 -5.6H3" stroke="#fff" stroke-width="1.5" fill="none"/><path d="M2.6 -8.3L5.8 -5.6L2.6 -2.9ZM2.6 2.9L5.8 5.6L2.6 8.3Z" fill="#fff"/></g>
<text transform="translate(515.3 615.6) scale(0.925 1)" class="nl i">Hide Admin Page</text>
<rect x="485.2" y="608.7" width="7" height="7" rx="2" fill="#d9d9d9" stroke="#858590" stroke-width="0.9"/>
<rect x="612.0" y="608.7" width="7" height="7" rx="2" fill="#d9d9d9" stroke="#858590" stroke-width="0.9"/>
<rect x="740.5" y="587.7" width="84.0" height="21.0" rx="3" fill="#19a0aa" stroke="#858590" stroke-width="1"/>
<path d="M803.5 588.2H821.5Q824.0 588.2 824.0 590.7V605.7Q824.0 608.2 821.5 608.2H803.5Z" fill="rgba(0,0,0,0.05)"/>
<path d="M803.5 588.7V607.7" stroke="rgba(0,0,0,0.08)" stroke-width="1"/>
<g transform="translate(814.0,598.2)"><circle r="5.7" fill="#fff"/><path d="M-3.2 0H2.5M0 -2.8L2.8 0L0 2.8" stroke="#19a0aa" stroke-width="1.6" fill="none"/></g>
<text transform="translate(757 601.6) scale(0.925 1)" class="nl">ui control</text>
<rect x="737.0" y="594.7" width="7" height="7" rx="2" fill="#d9d9d9" stroke="#858590" stroke-width="0.9"/>
<rect x="821.0" y="594.7" width="7" height="7" rx="2" fill="#d9d9d9" stroke="#858590" stroke-width="0.9"/>
<rect x="852.5" y="531.7" width="125.89999999999998" height="21.0" rx="3" fill="#2ab3c0" stroke="#858590" stroke-width="1"/>
<path d="M873.5 532.2H855.5Q853.0 532.2 853.0 534.7V549.7Q853.0 552.2 855.5 552.2H873.5Z" fill="rgba(0,0,0,0.05)"/>
<path d="M873.5 532.7V551.7" stroke="rgba(0,0,0,0.08)" stroke-width="1"/>
<g transform="translate(863.0,542.2)" stroke="#fff" stroke-width="1.4" fill="none"><path d="M-3 -4L-6.5 0L-3 4M3 -4L6.5 0L3 4M1.5 -6L-1.5 6"/></g>
<text transform="translate(879.1 545.6) scale(0.925 1)" class="nl i">admin page style</text>
<rect x="849.0" y="538.7" width="7" height="7" rx="2" fill="#d9d9d9" stroke="#858590" stroke-width="0.9"/>
<rect x="974.9" y="538.7" width="7" height="7" rx="2" fill="#d9d9d9" stroke="#858590" stroke-width="0.9"/>
<rect x="488.7" y="643.7" width="223.8" height="21.0" rx="3" fill="#fff" stroke="#858590" stroke-width="1"/>
<path d="M489.2 644.2h20.5v20.0h-20.5z" fill="rgba(0,0,0,0.05)"/>
<g transform="translate(499.2,654.2)" fill="none" stroke="#c4b8ba" stroke-width="0.8"><ellipse cx="0.5" cy="-1.2" rx="5.8" ry="3.8"/><path d="M-3.2 1.8L-5.5 4.8L-0.5 2.5"/></g>
<text transform="translate(515.3 657.6) scale(0.925 1)" class="nl i">Redirect is non-admin trying direct access</text>
    <!-- tab bar -->
    <rect x="280" y="42" width="874" height="24.5" fill="#fff"/>
    <path d="M281.5 42V63.5Q281.5 66.5 284.5 66.5H1154" stroke="#b9b9c3" stroke-width="1" fill="none"/>
    <path d="M1116.5 54.8H1124M1120.25 51V58.5" stroke="#555" stroke-width="1.6"/>
    <path d="M1139.8 54L1145 54L1142.4 56.8Z" fill="#777"/>
    <!-- right border -->
    <rect x="1154" y="42" width="4" height="650" fill="#f7f7fa"/>
    <path d="M1154.5 42V692" stroke="#b9b9c3" stroke-width="1"/>
    <rect x="1156" y="347.7" width="2" height="35.3" fill="#a9a9b1"/>
    <!-- bottom bar -->
    <rect x="280" y="673.5" width="874" height="18.5" fill="#f3f3fa"/>
    <path d="M280 673.5H1154M280 691.5H1154" stroke="#c9c9d3" stroke-width="1"/>
    <rect x="1091.5" y="676.5" width="12.2" height="13" fill="#fafafd" stroke="#c9c9d3" stroke-width="0.8"/>
    <path d="M1094 680.5l2.5 -1 3 1 2.5 -1v7l-2.5 1 -3 -1 -2.5 1z" fill="none" stroke="#999" stroke-width="0.8"/>
    <rect x="1107.5" y="676.5" width="39" height="13" fill="#fafafd" stroke="#c9c9d3" stroke-width="0.8"/>
    <path d="M1120.5 676.5V689.5M1133.5 676.5V689.5" stroke="#c9c9d3" stroke-width="0.8"/>
    <path d="M1110.5 683H1117" stroke="#555" stroke-width="1.4"/>
    <circle cx="1126.5" cy="683" r="3" fill="none" stroke="#555" stroke-width="1"/>
    <path d="M1136.5 683H1143M1139.75 679.8V686.2" stroke="#555" stroke-width="1.4"/>
    <!-- canvas left shadow -->
    <rect x="280" y="67" width="10" height="606" fill="url(#shd)"/>
    <defs><linearGradient id="shd" x1="0" x2="1"><stop offset="0" stop-color="#000" stop-opacity="0.06"/><stop offset="1" stop-color="#000" stop-opacity="0"/></linearGradient></defs>
    <!-- drag dots -->
    <g fill="#333"><rect x="1094" y="654.5" width="1.8" height="1.8"/><rect x="1099" y="654.5" width="1.8" height="1.8"/><rect x="1094" y="659.2" width="1.8" height="1.8"/><rect x="1099" y="659.2" width="1.8" height="1.8"/><rect x="1094" y="664" width="1.8" height="1.8"/><rect x="1099" y="664" width="1.8" height="1.8"/></g>
    <!-- chat bubble -->
    <circle cx="1127" cy="659.3" r="21" fill="#3c5a7a"/>
    <g fill="none" stroke="#fff" stroke-width="1.3"><path d="M1118 654.5Q1118 652 1120.5 652H1131Q1133.5 652 1133.5 654.5V662Q1133.5 664.5 1131 664.5H1122L1118 668.5Z"/><path d="M1121 649.5H1134Q1136.5 649.5 1136.5 652V661"/></g>
  </svg>
</div>
</body></html>
